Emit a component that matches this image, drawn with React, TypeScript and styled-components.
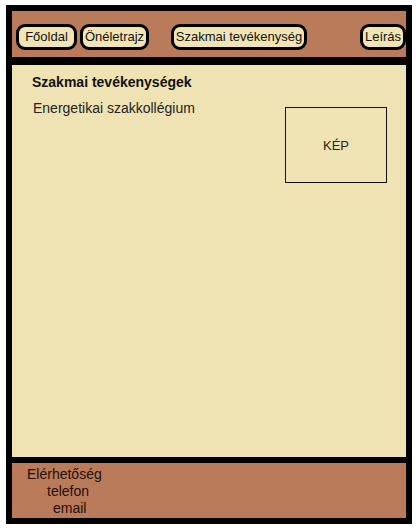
import React from "react";
import styled, { createGlobalStyle } from "styled-components";

const Global = createGlobalStyle`
  html, body { margin: 0; padding: 0; background: #ffffff; }
  body { font-family: "Liberation Sans", Arial, sans-serif; }
`;

const Frame = styled.div`
  box-sizing: border-box;
  margin: 5px 0 0 6px;
  width: 406px;
  height: 519px;
  border: 6px solid #000;
  display: flex;
  flex-direction: column;
  background: #000;
`;

const Header = styled.nav`
  flex: none;
  height: 54px;
  box-sizing: border-box;
  background: #b97b5a;
  display: flex;
  align-items: flex-start;
  padding: 13px 0 0 4px;
  border-bottom: 8px solid #000;
`;

const NavButton = styled.div<{ $w: number; $ml: number }>`
  box-sizing: border-box;
  width: ${(p) => p.$w}px;
  height: 26px;
  margin-left: ${(p) => p.$ml}px;
  border: 3px solid #000;
  border-radius: 9px;
  background: #f1e4b5;
  color: #111;
  font-size: 13px;
  line-height: 20px;
  text-align: center;
  white-space: nowrap;
  overflow: hidden;
`;

const Main = styled.main`
  flex: 1;
  background: #f0e3b3;
  display: flex;
  justify-content: space-between;
  padding: 9px 19px 0 20px;
  box-sizing: border-box;
`;

const TextCol = styled.div`
  display: flex;
  flex-direction: column;
  gap: 10px;
`;

const Title = styled.h1`
  margin: 0;
  font-size: 14px;
  line-height: 16px;
  font-weight: bold;
  color: #111;
`;

const Item = styled.p`
  margin: 0 0 0 1px;
  font-size: 14px;
  line-height: 17px;
  color: #222;
`;

const ImageBox = styled.div`
  box-sizing: border-box;
  margin-top: 33px;
  width: 102px;
  height: 76px;
  border: 1px solid #111;
  display: flex;
  align-items: center;
  justify-content: center;
  font-size: 13px;
  color: #2a2418;
`;

const Footer = styled.footer`
  flex: none;
  height: 61px;
  box-sizing: border-box;
  border-top: 6px solid #000;
  background: #b97b5a;
  padding-top: 3px;
  display: flex;
  flex-direction: column;
`;

const FooterLine = styled.div<{ $indent: number }>`
  padding-left: ${(p) => p.$indent}px;
  font-size: 14px;
  line-height: 17px;
  color: #241005;
`;

export default function App() {
  return (
    <>
      <Global />
      <Frame>
        <Header>
          <NavButton $w={61} $ml={0}>Főoldal</NavButton>
          <NavButton $w={69} $ml={3}>Önéletrajz</NavButton>
          <NavButton $w={136} $ml={22}>Szakmai tevékenység</NavButton>
          <NavButton $w={46} $ml={53}>Leírás</NavButton>
        </Header>
        <Main>
          <TextCol>
            <Title>Szakmai tevékenységek</Title>
            <Item>Energetikai szakkollégium</Item>
          </TextCol>
          <ImageBox>KÉP</ImageBox>
        </Main>
        <Footer>
          <FooterLine $indent={15}>Elérhetőség</FooterLine>
          <FooterLine $indent={35}>telefon</FooterLine>
          <FooterLine $indent={41}>email</FooterLine>
        </Footer>
      </Frame>
    </>
  );
}
